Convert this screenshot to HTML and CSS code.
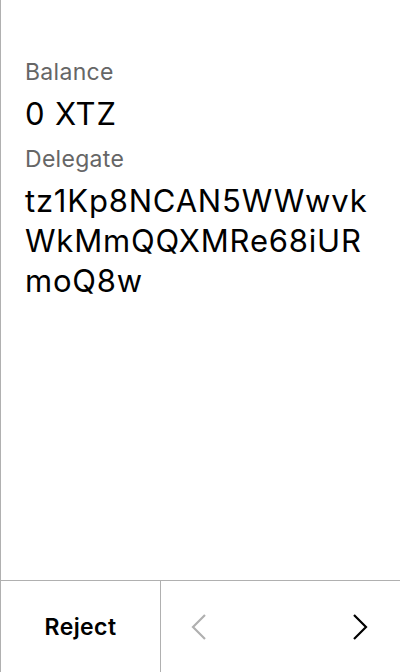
FILE: index.html
```html
<!DOCTYPE html>
<html>
<head>
<meta charset="utf-8">
<link rel="stylesheet" href="styles.css">
</head>
<body>
<div class="screen">
  <div class="content">
    <div class="field">
      <div class="label">Balance</div>
      <div class="value">0 XTZ</div>
    </div>
    <div class="field">
      <div class="label">Delegate</div>
      <div class="value">tz1Kp8NCAN5WWwvk<br>WkMmQQXMRe68iUR<br>moQ8w</div>
    </div>
  </div>
  <div class="footer">
    <div class="reject">Reject</div>
    <div class="nav">
      <svg class="chev" width="16" height="26" viewBox="0 0 16 26"><path d="M14 1 L2 13 L14 25" fill="none" stroke="#b0b0b0" stroke-width="2.2"/></svg>
      <svg class="chev" width="16" height="26" viewBox="0 0 16 26"><path d="M2 1 L14 13 L2 25" fill="none" stroke="#000" stroke-width="2.2"/></svg>
    </div>
  </div>
</div>
</body>
</html>
```
FILE: styles.css
```css
html, body { margin: 0; padding: 0; background: #fff; }
body { font-family: Inter, "Noto Sans", sans-serif; color: #000; }
.screen {
  width: 400px; height: 672px; box-sizing: border-box;
  border-left: 1px solid #b0b0b0;
  display: flex; flex-direction: column;
}
.content { flex: 1; padding: 58px 0 0 24px; }
.field { margin-bottom: 11px; }
.label { font-size: 23px; line-height: 28px; color: #666; letter-spacing: 0.3px; }
.value { font-size: 31px; line-height: 40px; margin-top: 8px; letter-spacing: 0.8px; }
.footer {
  height: 92px; box-sizing: border-box; border-top: 1px solid #b0b0b0;
  display: flex;
}
.reject {
  width: 159px; border-right: 1px solid #b0b0b0;
  display: flex; align-items: center; justify-content: center;
  font-size: 23px; font-weight: 600; letter-spacing: 0.4px;
}
.nav { flex: 1; display: flex; align-items: center; justify-content: space-between; padding: 0 32px 0 30px; }
```
